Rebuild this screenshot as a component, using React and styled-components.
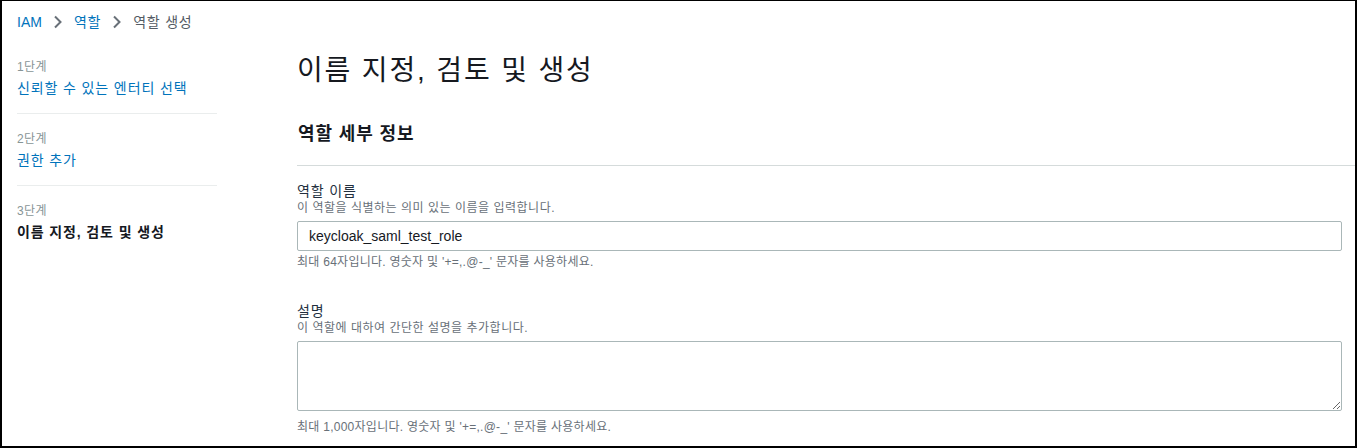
import styled, { createGlobalStyle } from "styled-components";

const GlobalStyle = createGlobalStyle`
    html, body {
        margin: 0;
        padding: 0;
        background: #fff;
    }
    body {
        font-family: "Liberation Sans", "Noto Sans CJK KR", sans-serif;
        color: #16191f;
        letter-spacing: 0.055em;
    }
    * {
        box-sizing: border-box;
    }
`

const Frame = styled.div`
    width: 1357px;
    height: 448px;
    border: 2px solid #000;
    border-top-width: 1px;
    overflow: hidden;
    background: #fff;
`

// 상단 경로
const Breadcrumb = styled.nav`
    display: flex;
    align-items: flex-start;
    height: 31px;
    padding: 11px 0 0 15px;
    font-size: 14px;
    line-height: 20px;
`

const Crumb = styled.span`
    color: ${(p) => (p.$current ? "#545b64" : "#0073bb")};
    letter-spacing: ${(p) => (p.$latin ? "0" : "0.055em")};
`

const Chevron = styled.svg`
    width: 10px;
    height: 14px;
    margin: 3px 11px 0;
    flex: none;
`

const Body = styled.div`
    display: grid;
    grid-template-columns: 200px 1fr;
    column-gap: 80px;
    padding-left: 15px;
`

// 단계 목록
const Steps = styled.ol`
    list-style: none;
    margin: 27px 0 0;
    padding: 0;
`

const Step = styled.li`
    padding: ${(p) => (p.$first ? "0" : "17px")} 0 15px;
    border-bottom: ${(p) => (p.$last ? "none" : "1px solid #eaeded")};
`

const StepNumber = styled.div`
    font-size: 12px;
    line-height: 16px;
    color: #879596;
    letter-spacing: 0.03em;
`

const StepName = styled.div`
    margin-top: 3px;
    font-size: 14px;
    line-height: 20px;
    color: ${(p) => (p.$active ? "#16191f" : "#0073bb")};
    font-weight: ${(p) => (p.$active ? 700 : 400)};
`

const Main = styled.main`
    display: flex;
    flex-direction: column;
    padding-top: 21px;
`

const Title = styled.h1`
    margin: 0;
    font-size: 28px;
    line-height: 36px;
    font-weight: 400;
    letter-spacing: 0.066em;
    color: #16191f;
`

const SectionHeader = styled.div`
    margin-top: 33px;
    padding: 0 0 19px 1px;
    border-bottom: 1px solid #d5dbdb;
`

const SectionTitle = styled.h2`
    margin: 0;
    font-size: 18px;
    line-height: 24px;
    font-weight: 700;
    color: #16191f;
`

const Field = styled.div`
    display: flex;
    flex-direction: column;
    margin: ${(p) => p.$top}px 13px 0 0;
`

const Label = styled.label`
    font-size: 14px;
    line-height: 18px;
    color: #232f3e;
`

const Description = styled.div`
    font-size: 12px;
    line-height: 16px;
    letter-spacing: 0.043em;
    color: #687078;
`

const TextInput = styled.input`
    display: block;
    margin-top: 5px;
    height: 30px;
    width: 100%;
    padding: 0 11px;
    border: 1px solid #aab7b8;
    border-radius: 2px;
    font-family: "Liberation Sans", "Noto Sans CJK KR", sans-serif;
    font-size: 14px;
    letter-spacing: 0;
    color: #16191f;
    background: #fff;
    outline: none;
`

const TextArea = styled.textarea`
    display: block;
    margin-top: 5px;
    height: 70px;
    width: 100%;
    padding: 4px 11px;
    border: 1px solid #aab7b8;
    border-radius: 2px;
    font-family: "Liberation Sans", "Noto Sans CJK KR", sans-serif;
    font-size: 14px;
    color: #16191f;
    background: #fff;
    outline: none;
`

const Hint = styled.div`
    margin-top: ${(p) => p.$gap}px;
    font-size: 12px;
    line-height: 16px;
    letter-spacing: 0.022em;
    color: #687078;
`

function ChevronIcon() {
    return (
        <Chevron viewBox="0 0 10 14" fill="none">
            <path d="M2 1.5 L7.5 7 L2 12.5" stroke="#687078" strokeWidth="2" />
        </Chevron>
    )
}

const steps = [
    { number: "1단계", name: "신뢰할 수 있는 엔터티 선택" },
    { number: "2단계", name: "권한 추가" },
    { number: "3단계", name: "이름 지정, 검토 및 생성", active: true },
]

export default function App() {
    return (
        <Frame>
            <GlobalStyle />
            <Breadcrumb>
                <Crumb $latin>IAM</Crumb>
                <ChevronIcon />
                <Crumb>역할</Crumb>
                <ChevronIcon />
                <Crumb $current>역할 생성</Crumb>
            </Breadcrumb>
            <Body>
                <Steps>
                    {steps.map((step, index) => (
                        <Step key={step.number} $first={index === 0} $last={index === steps.length - 1}>
                            <StepNumber>{step.number}</StepNumber>
                            <StepName $active={step.active}>{step.name}</StepName>
                        </Step>
                    ))}
                </Steps>
                <Main>
                    <Title>이름 지정, 검토 및 생성</Title>
                    <SectionHeader>
                        <SectionTitle>역할 세부 정보</SectionTitle>
                    </SectionHeader>
                    <Field $top={16}>
                        <Label>역할 이름</Label>
                        <Description>이 역할을 식별하는 의미 있는 이름을 입력합니다.</Description>
                        <TextInput defaultValue="keycloak_saml_test_role" />
                        <Hint $gap={3}>최대 64자입니다. 영숫자 및 '+=,.@-_' 문자를 사용하세요.</Hint>
                    </Field>
                    <Field $top={32}>
                        <Label>설명</Label>
                        <Description>이 역할에 대하여 간단한 설명을 추가합니다.</Description>
                        <TextArea />
                        <Hint $gap={8}>최대 1,000자입니다. 영숫자 및 '+=,.@-_' 문자를 사용하세요.</Hint>
                    </Field>
                </Main>
            </Body>
        </Frame>
    )
}
